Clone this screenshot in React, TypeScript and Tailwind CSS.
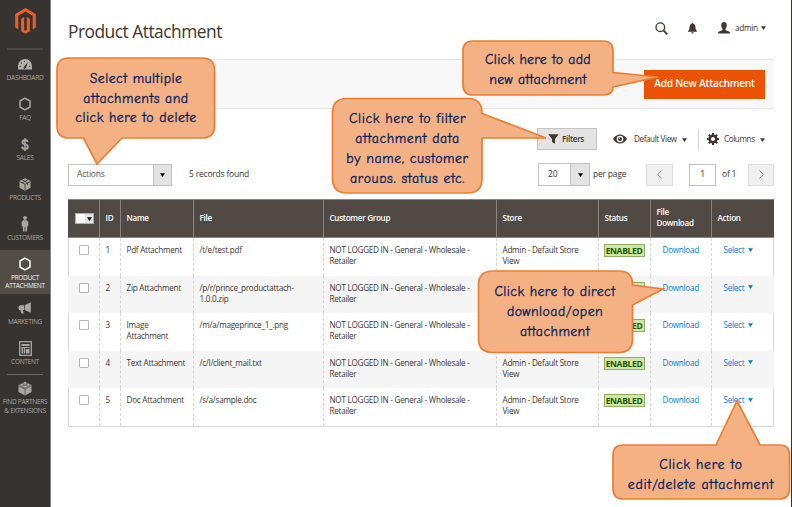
import React from 'react';

type IconProps = { className?: string };

const MagentoLogo = () => (
  <svg width="21" height="26" viewBox="0 0 21 26" fill="#ea5f25">
    <path d="M10.5 0 0.2 6v13.600l3.100 1.800V7.800l7.200-4.200 7.200 4.200v13.600l3.100-1.800V6z" />
    <path d="M9.200 22V9L6.100 10.800v12.400l4.400 2.600 4.400-2.600V10.800L11.800 9v13l-1.300.8z" />
  </svg>
);

const GaugeIcon = () => (
  <svg width="14" height="11" viewBox="0 0 14 11">
    <path d="M0 10.500V7a7 7 0 0 1 14 0v3.500z" fill="#b3afa9" />
    <path d="M9.800 3.200 6.200 7.400a1.300 1.300 0 1 0 1.900 1.200z" fill="#373330" />
    <g fill="#373330">
      <circle cx="2.200" cy="7.400" r=".6" /><circle cx="3.500" cy="4.200" r=".6" />
      <circle cx="6.600" cy="2.500" r=".6" /><circle cx="11.800" cy="7.400" r=".6" />
    </g>
  </svg>
);

const HexIcon = ({ className = 'text-[#aaa6a0]' }: IconProps) => (
  <svg width="12" height="14" viewBox="0 0 12 14" className={className}>
    <path d="M6 1.200 11 4v6L6 12.800 1 10V4z" fill="none" stroke="currentColor" strokeWidth="1.500" />
  </svg>
);

const DollarIcon = () => (
  <svg width="8" height="13" viewBox="0 0 8 13" fill="none" stroke="#aaa6a0">
    <path d="M6.800 3.900C6.400 2.700 5.300 2.200 4 2.200c-1.500 0-2.600.7-2.600 2C1.400 7.200 6.900 5.700 6.900 8.700c0 1.400-1.200 2.200-2.900 2.200-1.500 0-2.700-.7-3-2.100" strokeWidth="1.900" />
    <path d="M4 0v13" strokeWidth="1.500" />
  </svg>
);

const BoxIcon = () => (
  <svg width="12" height="13" viewBox="0 0 12 13">
    <path d="M6 .3 11.500 3v6.800L6 12.700.500 9.800V3z" fill="#aaa6a0" />
    <path d="M.7 3.600 6 6.300l5.300-2.700M6 6.300v6M3.200 1.900l5.400 2.800v2.600M8.700 1.900 3.300 4.700" fill="none" stroke="#373330" strokeWidth=".8" />
  </svg>
);

const PersonIcon = () => (
  <svg width="8" height="16" viewBox="0 0 8 16" fill="#aaa6a0">
    <circle cx="4" cy="2" r="1.900" />
    <path d="M2.100 4.300h3.800L7.300 6v4.300h-1L6 15.500H4.400V11h-.8v4.500H2L1.700 10.300h-1V6z" />
  </svg>
);

const HornIcon = () => (
  <svg width="14" height="12" viewBox="0 0 14 12" fill="#aaa6a0">
    <path d="M12.800.3v10.500L7 8.200V3.100zM6.300 3.200v4.900H4.800l1.100 3.500H3.400L2.300 8.100C.9 8 .5 7 .5 5.700s.8-2.300 2-2.400z" />
  </svg>
);

const ContentIcon = () => (
  <svg width="13" height="15" viewBox="0 0 13 15" fill="none" stroke="#aaa6a0">
    <path d="M.7.7h11.600v13.600H.7z" strokeWidth="1.300" />
    <path d="M2.500 4h8" strokeWidth="2" />
    <path d="M2.500 6.500h8M5.500 6v6.500" strokeWidth="1" />
    <path d="M2.500 6h1.800v6.500H2.500zM6.700 8h3.800v4.500H6.700z" fill="#aaa6a0" stroke="none" />
  </svg>
);

const BrickIcon = () => (
  <svg width="14" height="15" viewBox="0 0 14 15">
    <path d="m7 1 6.500 3v7L7 14.500.500 11V4z" fill="#aaa6a0" />
    <path d="M.8 4.900 7 8.100l6.200-3.200M7 8.100V14" fill="none" stroke="#373330" strokeWidth=".6" />
    <g fill="#c0bcb6" stroke="#373330" strokeWidth=".5">
      <ellipse cx="7" cy="2" rx="1.900" ry="1.200" /><ellipse cx="3.700" cy="3.900" rx="1.800" ry="1.200" />
      <ellipse cx="10.300" cy="3.900" rx="1.800" ry="1.200" /><ellipse cx="7" cy="5.600" rx="1.900" ry="1.200" />
    </g>
  </svg>
);

const Caret = ({ className = 'text-black' }: IconProps) => (
  <svg width="5" height="4" viewBox="0 0 5 4" className={`shrink-0 ${className}`}>
    <path d="M0 .3h5L2.500 3.900z" fill="currentColor" />
  </svg>
);

type Item = { icon: React.ReactNode; lines: string[]; active?: boolean };

const mainItems: Item[] = [
  { icon: <GaugeIcon />, lines: ['DASHBOARD'] },
  { icon: <HexIcon />, lines: ['FAQ'] },
  { icon: <DollarIcon />, lines: ['SALES'] },
  { icon: <BoxIcon />, lines: ['PRODUCTS'] },
  { icon: <PersonIcon />, lines: ['CUSTOMERS'] },
  { icon: <HexIcon className="text-white" />, lines: ['PRODUCT', 'ATTACHMENT'], active: true },
  { icon: <HornIcon />, lines: ['MARKETING'] },
  { icon: <ContentIcon />, lines: ['CONTENT'] },
];

const MenuItem = ({ icon, lines, active }: Item) => (
  <div className={`flex flex-col items-center ${active ? 'h-11 bg-[#524c47] text-[#f7f3eb]' : 'h-10 text-[#aaa6a0]'}`}>
    <div className="flex h-[22px] w-full items-center justify-center pt-[6px]">{icon}</div>
    <div className="pt-[1.500px] text-center text-[6.500px] leading-[8.500px] tracking-[-0.280px] whitespace-nowrap">
      {lines.map((l) => <div key={l}>{l}</div>)}
    </div>
  </div>
);

const Sidebar = () => (
  <nav className="w-[51px] shrink-0 border-r border-[#85827f] bg-[#373330]">
    <div className="flex h-12 justify-center pt-2"><MagentoLogo /></div>
    <div className="mx-[7px] h-0.5 bg-[#4c4743]" />
    {mainItems.map((i) => <MenuItem key={i.lines[0]} {...i} />)}
    <div className="mx-[7px] h-px bg-[#6a6560]" />
    <MenuItem icon={<BrickIcon />} lines={['FIND PARTNERS', '& EXTENSIONS']} />
  </nav>
);

const Header = () => (
  <header className="flex h-[59px] items-start justify-between pr-2">
    <h1 className="pt-[19px] text-[17.400px] leading-6 tracking-[-0.520px] text-[#41362f]">Product Attachment</h1>
    <div className="mt-[19px] flex h-[18px] items-center text-[#41362f]">
      <svg width="13" height="13" viewBox="0 0 13 13" fill="none" stroke="currentColor">
        <circle cx="5.300" cy="5.200" r="4.300" strokeWidth="1.300" /><path d="m8.400 8.400 3.900 4" strokeWidth="1.800" />
      </svg>
      <svg width="9" height="11" viewBox="0 0 9 11" className="ml-5" fill="currentColor">
        <path d="M4.500 0c.6 0 .8.400.8.800C7 1.300 7.500 2.800 7.500 4.500c0 2 .5 2.800 1.500 3.500v.8H0V8c1-.7 1.500-1.500 1.500-3.500 0-1.700.5-3.200 2.200-3.700 0-.4.200-.8.800-.8zM3.300 9.300h2.400c0 .8-.5 1.200-1.200 1.200s-1.200-.4-1.200-1.200z" />
      </svg>
      <svg width="12" height="12" viewBox="0 0 12 12" className="ml-[21px]" fill="currentColor">
        <path d="M6 0c1.900 0 2.800 1.300 2.800 3.200C8.800 5 8 6.200 7.500 6.700v1.200c.5.800 3.800 1 4.300 2l.2 1.600H0l.2-1.600c.5-1 3.800-1.200 4.300-2V6.700C4 6.200 3.200 5 3.200 3.200 3.200 1.300 4.100 0 6 0z" />
      </svg>
      <span className="ml-[5px] w-[22px] text-[8.300px] tracking-[-0.350px] whitespace-nowrap">admin</span>
      <Caret className="ml-1 text-[#41362f]" />
    </div>
  </header>
);

const Toolbar = () => (
  <div className="flex h-[22px] items-center justify-end text-[8.100px] tracking-[-0.380px] text-[#41362f]">
    <button className="flex h-[22px] w-[60px] items-center border border-[#c4c4c4] bg-[#e3e3e3] pl-2.5 text-[8.200px] font-semibold tracking-[-0.350px]">
      <svg width="11" height="10" viewBox="0 0 11 10" className="mr-[3px]"><path d="M.3.3h10.400L7 5v4.700L4 8V5z" fill="#41362f" /></svg>
      Filters
    </button>
    <svg width="14" height="10" viewBox="0 0 14 10" className="ml-[16px]">
      <path d="M0 5C1.800 2 4.300.5 7 .5S12.200 2 14 5C12.200 8 9.700 9.500 7 9.500S1.800 8 0 5z" fill="#41362f" />
      <circle cx="7" cy="5" r="3.300" fill="white" /><circle cx="7" cy="5" r="2.100" fill="#41362f" /><circle cx="6.400" cy="4.300" r=".7" fill="white" />
    </svg>
    <span className="ml-[7px] w-[43px] whitespace-nowrap">Default View</span>
    <Caret className="mt-0.5 ml-[5px]" />
    <div className="ml-[11px] h-[21px] w-px bg-[#d6d6d6]" />
    <svg width="12" height="12" viewBox="0 0 12 12" className="ml-2">
      <circle cx="6" cy="6" r="3.300" fill="none" stroke="#41362f" strokeWidth="2.600" />
      <path d="M6 0v2.500M6 9.500V12M0 6h2.500M9.500 6H12M1.800 1.800l1.700 1.700M8.500 8.500l1.700 1.700M10.200 1.800 8.500 3.500M3.500 8.500l-1.700 1.700" stroke="#41362f" strokeWidth="2" />
    </svg>
    <span className="ml-[5px] w-[31px] whitespace-nowrap">Columns</span>
    <Caret className="mt-0.5 mr-[9px] ml-[5px]" />
  </div>
);

const Chevron = ({ d }: { d: string }) => (
  <svg width="5" height="9" viewBox="0 0 5 9" fill="none" stroke="#8a8580" strokeWidth="1"><path d={d} /></svg>
);

const Pager = () => (
  <div className="flex h-[23px] items-center text-[8.500px] tracking-[-0.200px] text-[#41362f]">
    <div className="flex h-[22px] w-[104px] items-center justify-between border border-[#c2c2c2] bg-white pl-2">
      <span className="text-[#5c534d]">Actions</span>
      <div className="flex h-full w-[18px] items-center justify-center border-l border-[#c2c2c2] bg-[#e3e3e3]"><Caret /></div>
    </div>
    <span className="ml-[17px]">5 records found</span>
    <div className="ml-auto flex h-[23px] w-[52px] items-center justify-between border border-[#c2c2c2] bg-white pl-[9px]">
      <span>20</span>
      <div className="flex h-full w-[19px] items-center justify-center border-l border-[#c2c2c2] bg-[#e3e3e3]"><Caret /></div>
    </div>
    <span className="ml-[3px] w-[34px] whitespace-nowrap">per page</span>
    <div className="ml-[19px] flex h-[22px] w-[27px] items-center justify-center border border-[#dcdcdc] bg-[#f0f0f0]"><Chevron d="M4.500.500.700 4.500l3.800 4" /></div>
    <div className="ml-4 flex h-[22px] w-[27px] items-center justify-center border border-[#c2c2c2]">1</div>
    <span className="ml-1.5 w-[14px] whitespace-nowrap">of 1</span>
    <div className="ml-3 flex h-[22px] w-[26px] items-center justify-center border border-[#dcdcdc] bg-[#f0f0f0]"><Chevron d="m.5.500 3.800 4-3.800 4" /></div>
  </div>
);

const columns = 'grid grid-cols-[31px_21px_73px_130px_173px_102px_52px_61px_63px]';
const headings = ['ID', 'Name', 'File', 'Customer Group', 'Store', 'Status', 'File\nDownload', 'Action'];
const rows = [
  ['1', 'Pdf Attachment', '/t/e/test.pdf'],
  ['2', 'Zip Attachment', '/p/r/prince_productattach-\n1.0.0.zip'],
  ['3', 'Image\nAttachment', '/m/a/mageprince_1_.png'],
  ['4', 'Text Attachment', '/c/l/client_mail.txt'],
  ['5', 'Doc Attachment', '/s/a/sample.doc'],
];

const Cell = ({ children }: { children: React.ReactNode }) => (
  <div className="border-l border-dashed border-[#d6d6d6] pt-[6px] pl-[5.500px] whitespace-pre">{children}</div>
);

const Table = () => (
  <section className="h-[228px] border border-[#d6d6d6] text-[8.100px] leading-[11px] tracking-[-0.240px] text-[#41362f]">
    <div className={`${columns} -mx-px -mt-px h-[39px] border-t border-b border-[#8a837f] bg-[#514943] font-semibold tracking-[-0.300px] text-white`}>
      <div className="flex items-center pl-[7px]">
        <div className="flex h-[11px] w-[19px] border border-[#adadad] bg-white">
          <div className="ml-auto flex w-2 items-center justify-center bg-[#e3e3e3]"><Caret /></div>
        </div>
      </div>
      {headings.map((h) => (
        <div key={h} className="flex items-center border-l border-[#8a837f] pb-[3px] pl-[5.500px] whitespace-pre"><span>{h}</span></div>
      ))}
    </div>
    <div className="-mx-px">
      {rows.map(([id, name, file], i) => (
        <div key={id} className={`${columns} h-[37.600px] ${i % 2 ? 'bg-[#f5f5f5]' : ''}`}>
          <div className="pt-[7px] pl-[11px]"><div className="size-2.5 rounded-[1px] border border-[#b5b5b5] bg-white" /></div>
          <Cell>{id}</Cell>
          <Cell>{name}</Cell>
          <Cell>{file}</Cell>
          <Cell>{'NOT LOGGED IN - General - Wholesale -\nRetailer'}</Cell>
          <Cell>{'Admin - Default Store\nView'}</Cell>
          <Cell>
            <div className="-ml-px h-[13px] w-[41px] border border-[#8fae64] bg-[#d0e5a9] text-center text-[8.500px] leading-[11px] font-bold tracking-[-0.340px] text-[#185b00]">ENABLED</div>
          </Cell>
          <Cell><span className="pl-1.5 text-[#007bdb]">Download</span></Cell>
          <Cell><span className="flex items-center pl-1.5 text-[#007bdb]">Select<Caret className="ml-1 text-[#007bdb]" /></span></Cell>
        </div>
      ))}
    </div>
  </section>
);

type CalloutProps = { box: string; view: string; path: string; text: string; lines: string[] };

/* Speech balloon: the outline is drawn in page units, the text flows over it. */
const Callout = ({ box, view, path, text, lines }: CalloutProps) => (
  <div className={`absolute ${box}`}>
    <svg viewBox={view} className="absolute inset-0 size-full">
      <path d={path} fill="#f4b183" stroke="#ed7d31" strokeWidth="1.700" strokeLinejoin="miter" />
    </svg>
    <div className={`relative overflow-hidden text-center font-['Comic_Sans_MS','Comic_Neue','Open_Sans',sans-serif] text-[13.800px] whitespace-nowrap text-[#002060] [-webkit-text-stroke:0.300px_#002060] ${text}`}>
      {lines.map((l) => <div key={l}>{l}</div>)}
    </div>
  </div>
);

export default function App() {
  return (
    <div className="relative flex h-[507px] w-[792px] overflow-hidden border-r border-[#373330] bg-white font-['Open_Sans',sans-serif]">
      <Sidebar />
      <main className="ml-[17px] w-[706px]">
        <Header />
        <div className="flex h-[50px] items-center justify-end border-y border-[#e3e3e3] bg-[#f8f8f8] pr-[9px]">
          <button className="h-[29px] w-[121px] bg-[#eb5202] text-[10.200px] font-semibold tracking-[-0.250px] text-white">Add New Attachment</button>
        </div>
        <div className="mt-[19px]"><Toolbar /></div>
        <div className="mt-[13px]"><Pager /></div>
        <div className="mt-[13px]"><Table /></div>
      </main>

      <Callout
        box="left-[55px] top-[55px] h-[112px] w-[162px]" view="55 55 162 112"
        path="M69 58H202Q214.500 58 214.500 70V126Q214.500 138 202 138H122L97 164 83.500 138H69Q57 138 57 126V70Q57 58 69 58Z"
        text="pt-[14px] leading-[19.500px] tracking-[0.480px]"
        lines={['Select multiple', 'attachments and', 'click here to delete']}
      />
      <Callout
        box="left-[460px] top-[38px] h-[60px] w-[200px]" view="460 38 200 60"
        path="M473 41H603Q613 41 613 51V72.500L658 77 613 87Q613 95 603 95H473Q463 95 463 85V51Q463 41 473 41Z"
        text="w-[156px] pt-[12px] leading-[20px] tracking-[0.300px]"
        lines={['Click here to add', 'new attachment']}
      />
      <Callout
        box="left-[330px] top-[96px] h-[100px] w-[220px]" view="330 96 220 100"
        path="M347 98.500H468Q482 98.500 482 113.500L546 138 482 138V178Q482 193 468 193H347Q332.500 193 332.500 178V113Q332.500 98.500 347 98.500Z"
        text="h-[87px] w-[155px] pt-[12.500px] leading-[20px] tracking-[0.600px]"
        lines={['Click here to filter', 'attachment data', 'by name, customer', 'groups, status etc.']}
      />
      <Callout
        box="left-[476px] top-[269px] h-[86px] w-[190px]" view="476 269 190 86"
        path="M493 271H619Q632.500 271 632.500 285L663 289 632.500 305V339Q632.500 352.500 619 352.500H493Q478.500 352.500 478.500 339V285Q478.500 271 493 271Z"
        text="w-[158px] pt-[13px] leading-[20px] tracking-[0.450px]"
        lines={['Click here to direct', 'download/open', 'attachment']}
      />
      <Callout
        box="left-[610px] top-[398px] h-[103px] w-[182px]" view="610 398 182 103"
        path="M623 445H716L737 401 760 445H780Q789.500 445 789.500 455V488Q789.500 499 780 499H623Q613 499 613 488V455Q613 445 623 445Z"
        text="pt-[57px] leading-[19.500px] tracking-[0.700px]"
        lines={['Click here to', 'edit/delete attachment']}
      />
    </div>
  );
}
